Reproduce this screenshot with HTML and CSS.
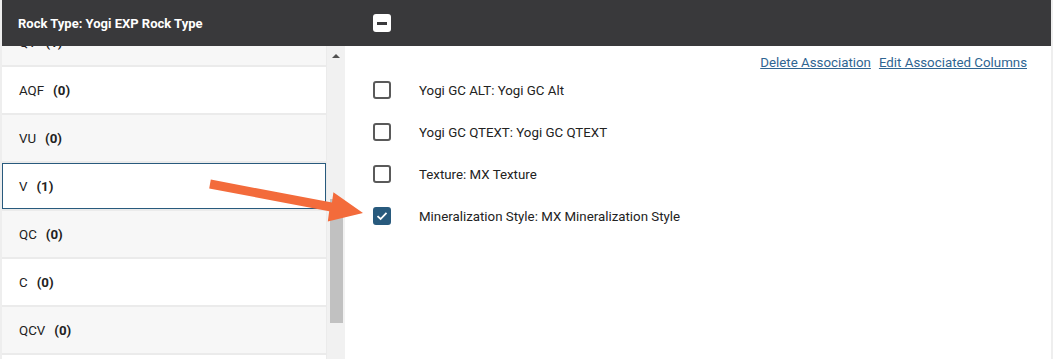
FILE: index.html
```html
<!DOCTYPE html>
<html lang="en">
<head>
    <meta charset="UTF-8">
    <title>Rock Type Associations</title>
    <link rel="stylesheet" href="styles.css">
</head>
<body>
    <div class="panel">
        <div class="panel-header">
            <div class="header-title">Rock Type: Yogi EXP Rock Type</div>
            <div class="header-tools">
                <button class="collapse-btn" title="Collapse"><span></span></button>
            </div>
        </div>

        <div class="panel-body">
            <div class="side">
                <div class="code-list">
                    <div class="code-row shade first"><span class="code">QV</span><b>(1)</b></div>
                    <div class="code-row"><span class="code">AQF</span><b>(0)</b></div>
                    <div class="code-row shade"><span class="code">VU</span><b>(0)</b></div>
                    <div class="code-row selected"><span class="code">V</span><b>(1)</b></div>
                    <div class="code-row shade"><span class="code">QC</span><b>(0)</b></div>
                    <div class="code-row"><span class="code">C</span><b>(0)</b></div>
                    <div class="code-row shade"><span class="code">QCV</span><b>(0)</b></div>
                    <div class="code-row"><span class="code">Q</span><b>(0)</b></div>
                </div>
                <div class="scrollbar">
                    <div class="scroll-up"></div>
                    <div class="scroll-thumb"></div>
                </div>
            </div>

            <div class="columns">
                <div class="links">
                    <a href="#">Delete Association</a>
                    <a href="#">Edit Associated Columns</a>
                </div>
                <label class="col-row"><span class="check"></span>Yogi GC ALT: Yogi GC Alt</label>
                <label class="col-row"><span class="check"></span>Yogi GC QTEXT: Yogi GC QTEXT</label>
                <label class="col-row"><span class="check"></span>Texture: MX Texture</label>
                <label class="col-row"><span class="check checked">
                    <svg width="12" height="10" viewBox="0 0 12 10"><path d="M1.5 5.2 L4.6 8 L10.5 1.8" fill="none" stroke="#fff" stroke-width="1.8"/></svg>
                </span>Mineralization Style: MX Mineralization Style</label>
            </div>
        </div>
    </div>

    <!-- annotation arrow -->
    <svg class="callout" width="1055" height="359" viewBox="0 0 1055 359">
        <path d="M210.8 179.6 L332 202.5 L333.4 192.2 L363 213 L327.8 221.6 L329.2 211.3 L209.2 188.4 Z" fill="#f36b3b"/>
    </svg>
</body>
</html>
```

FILE: styles.css
```css
body {
    margin: 0;
    font-family: Roboto, "Liberation Sans", sans-serif;
    font-size: 13.3px;
    color: #222;
    background: #fff;
}

.panel {
    position: relative;
    width: 1049px;
    height: 359px;
    border-left: 2px solid #eeeeee;
    border-right: 2px solid #eeeeee;
    overflow: hidden;
}

.panel-header {
    display: grid;
    grid-template-columns: 343px 1fr;
    align-items: center;
    height: 46px;
    background: #39393b;
    color: #fff;
    position: relative;
    z-index: 2;
}

.header-title {
    padding-left: 16px;
    font-size: 13px;
    font-weight: 700;
}

.header-tools {
    padding-left: 28px;
    display: flex;
}

.collapse-btn {
    width: 18px;
    height: 18px;
    padding: 0;
    border: none;
    border-radius: 3px;
    background: #fff;
    display: flex;
    align-items: center;
    justify-content: center;
}

.collapse-btn span {
    width: 10px;
    height: 3px;
    background: #39393b;
}

.panel-body {
    display: grid;
    grid-template-columns: 343px 1fr;
    height: 313px;
}

/* left list */
.side {
    display: flex;
    background: #ebebeb;
    overflow: hidden;
}

.code-list {
    width: 324px;
    margin-right: 1px;
    display: flex;
    flex-direction: column;
    gap: 2px;
}

.code-row {
    flex: none;
    height: 46px;
    box-sizing: border-box;
    display: flex;
    align-items: center;
    padding-left: 17px;
    background: #fff;
}

.code-row.shade {
    background: #f7f7f7;
}

.code-row.first {
    margin-top: -27px;
}

.code-row.selected {
    border: 1px solid #285a7d;
    padding-left: 16px;
}

.code-row b {
    margin-left: 9px;
    font-weight: 700;
}

.scrollbar {
    width: 18px;
    background: #f1f1f1;
    display: flex;
    flex-direction: column;
    align-items: center;
}

.scroll-up {
    margin-top: 8px;
    width: 0;
    height: 0;
    border-left: 4px solid transparent;
    border-right: 4px solid transparent;
    border-bottom: 4px solid #505050;
}

.scroll-thumb {
    margin-top: 141px;
    width: 13px;
    height: 124px;
    background: #c1c1c1;
}

/* right side */
.columns {
    padding: 9px 24px 0 28px;
}

.links {
    display: flex;
    justify-content: flex-end;
    gap: 8px;
    line-height: 16px;
    margin-bottom: -2px;
}

.links a {
    color: #2f6592;
}

.col-row {
    display: flex;
    align-items: center;
    height: 42px;
}

.check {
    width: 18px;
    height: 18px;
    box-sizing: border-box;
    border: 2px solid #5a5a5a;
    border-radius: 3px;
    margin-right: 28px;
    display: flex;
    align-items: center;
    justify-content: center;
}

.check.checked {
    background: #285a7d;
    border-color: #285a7d;
}

.callout {
    position: absolute;
    left: 0;
    top: 0;
    pointer-events: none;
    z-index: 5;
}
```
